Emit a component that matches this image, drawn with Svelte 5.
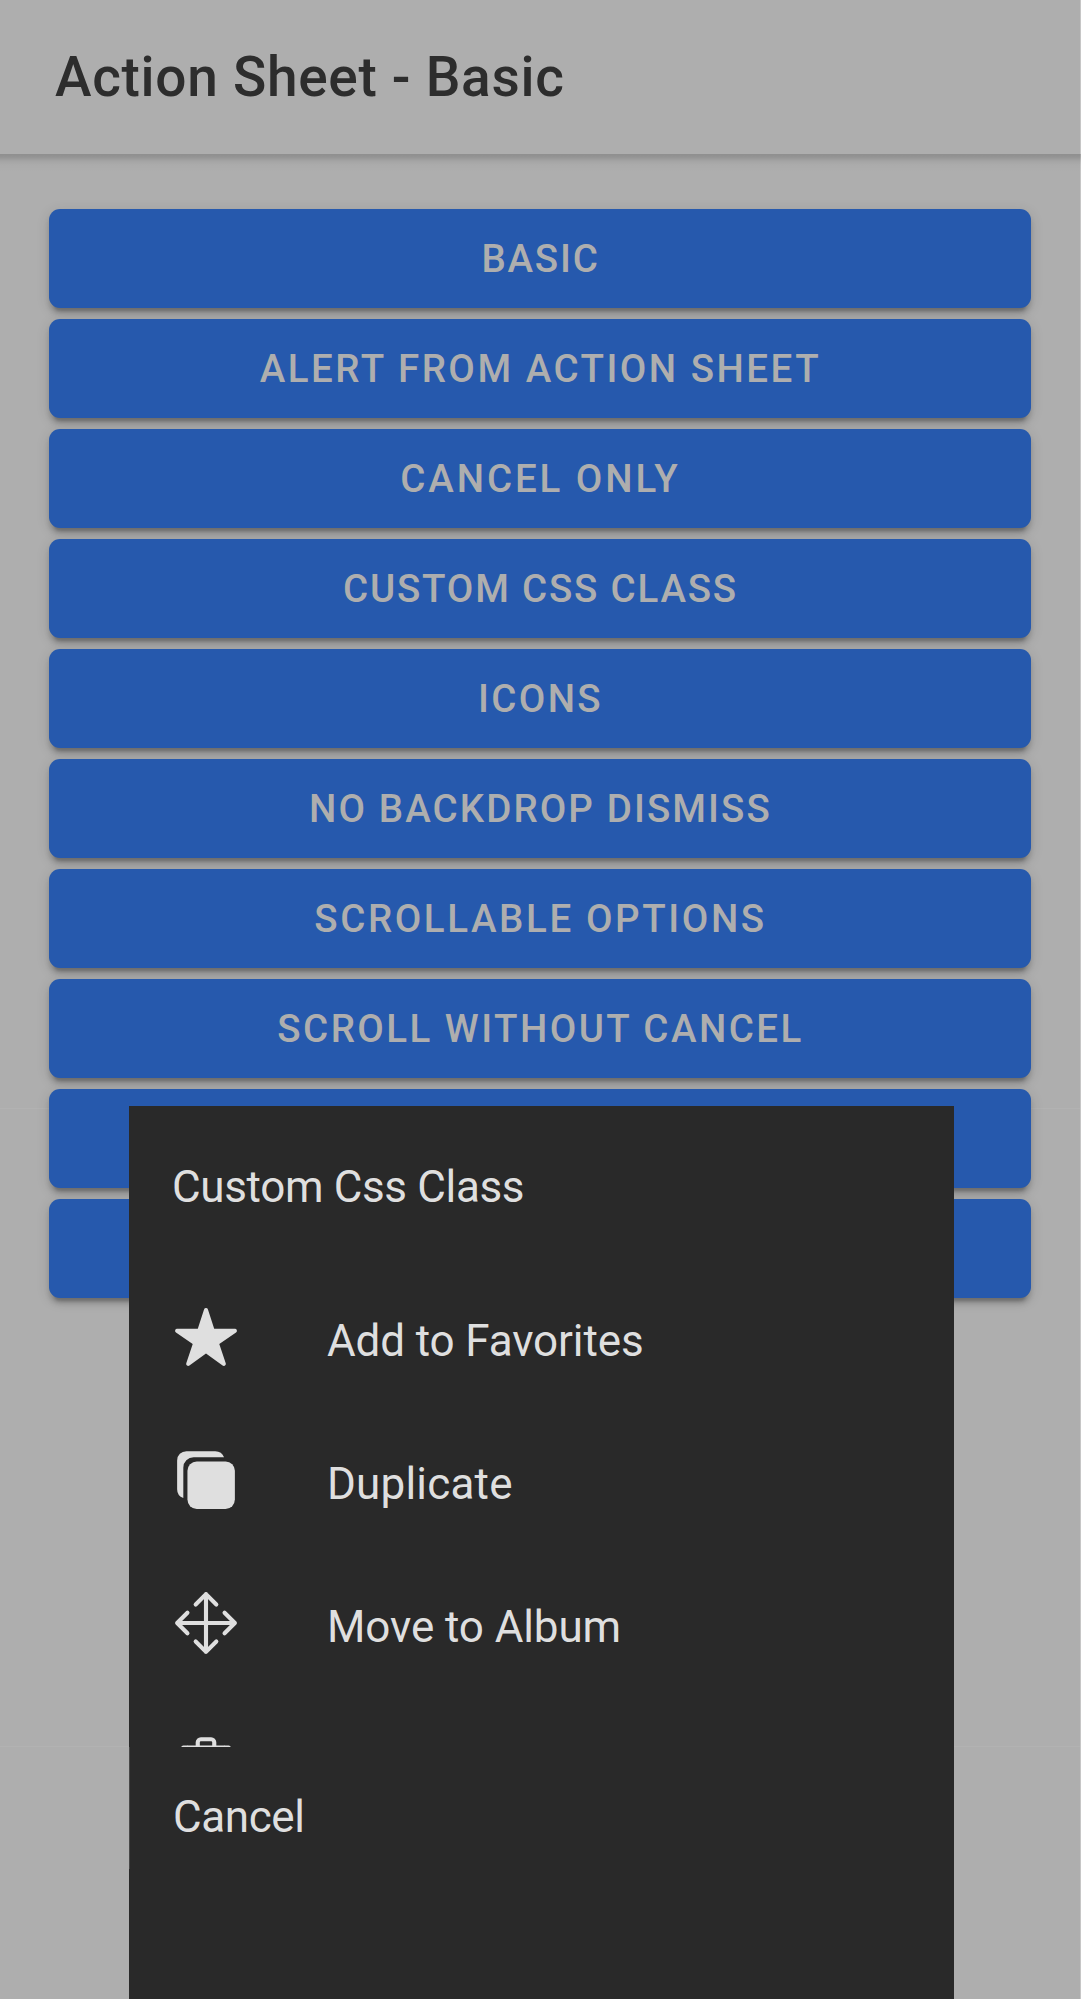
<script>
  // label and letter spacing in pixels
  const buttons = [
    ['Basic', 1.8],
    ['Alert from action sheet', 2.5],
    ['Cancel only', 2.9],
    ['Custom CSS class', 1.8],
    ['Icons', 2.4],
    ['No backdrop dismiss', 2.1],
    ['Scrollable options', 2.6],
    ['Scroll without cancel', 2.45],
    ['', 2.3],
    ['', 2.3]
  ];
</script>

<main>
  <header><h1>Action Sheet - Basic</h1></header>
  <div class="list">
    {#each buttons as [label, spacing]}
      <button style:letter-spacing="{spacing}px">{label}</button>
    {/each}
  </div>
  <section class="sheet">
    <div class="group">
      <h2>Custom Css Class</h2>
      <div class="row favorite">
        <svg viewBox="0 0 512 512"><path d="M394 480a16 16 0 01-9.39-3L256 383.76 127.39 477a16 16 0 01-24.55-18.08L153 310.35 23 221.2a16 16 0 019-29.2h160.38l48.4-148.95a16 16 0 0130.44 0l48.4 149H480a16 16 0 019.05 29.2L359 310.35l50.13 148.53A16 16 0 01394 480z" /></svg>
        <span>Add to Favorites</span>
      </div>
      <div class="row duplicate">
        <svg viewBox="0 0 512 512"><path d="M408 112H184a72 72 0 00-72 72v224a72 72 0 0072 72h224a72 72 0 0072-72V184a72 72 0 00-72-72z" /><path d="M395.88 80A72.12 72.12 0 00328 32H104a72 72 0 00-72 72v224a72.12 72.12 0 0048 67.88V160a80 80 0 0180-80z" /></svg>
        <span>Duplicate</span>
      </div>
      <div class="row album">
        <svg viewBox="0 0 512 512" class="line"><path d="M176 112l80-80 80 80M255.98 32l.02 448M176 400l80 80 80-80M400 176l80 80-80 80M112 176l-80 80 80 80M32 256h448" /></svg>
        <span>Move to Album</span>
      </div>
      <div class="row">
        <svg viewBox="0 0 512 512" class="line"><path d="M112 112l20 320c.95 18.49 14.4 32 32 32h184c18 0 31-13.500 32-32l20-320M80 112h352M192 112V72a24 24 0 0124-24h80a24 24 0 0124 24v40M256 176v224M184 176l8 224M328 176l-8 224" /></svg>
      </div>
    </div>
    <div class="cancel">Cancel</div>
  </section>
</main>

<style>
  :global(body) { margin: 0; }
  main {
    position: relative; width: 1081px; height: 1999px; overflow: hidden; font-family: Roboto, sans-serif;
    background:
      linear-gradient(#c6c6c6, #c6c6c6) 1080px 0 / 1px 100% no-repeat,
      linear-gradient(#b2b2b2, #b2b2b2) 0 1108px / 100% 1px no-repeat,
      linear-gradient(#b2b2b2, #b2b2b2) 0 1746px / 100% 1px no-repeat,
      #aeaeae;
  }
  header { box-sizing: border-box; height: 154px; padding: 0 55px; display: flex; align-items: center; }
  h1 { margin: 0; font-size: 55px; font-weight: 500; letter-spacing: .7px; color: #2d2d2d; }
  .list {
    padding: 55px 50px 55px 49px; display: flex; flex-direction: column; gap: 11px;
    background: linear-gradient(rgba(0, 0, 0, .18), rgba(0, 0, 0, .15) 3px, rgba(0, 0, 0, .06) 7px, rgba(0, 0, 0, .015) 11px, transparent 18px);
  }
  button { height: 99px; flex: none; padding: 0 6px 0 7px; border: 0; border-radius: 11px; background: #2659ad; color: #aeaeae; font: 500 38.5px Roboto, sans-serif; text-transform: uppercase; box-shadow: 0 8px 3px -5.5px rgba(0, 0, 0, .2), 0 5.5px 5.5px rgba(0, 0, 0, .14), 0 3px 14px rgba(0, 0, 0, .12); }
  .sheet { position: absolute; left: 129px; top: 1106px; width: 825px; height: 893px; background: #292929; color: #dfdfdf; font-size: 44px; }
  .group { height: 641px; overflow: hidden; }
  h2 { margin: 0; height: 163px; box-sizing: border-box; padding: 0 43px; line-height: 163px; font-size: 44px; font-weight: 400; letter-spacing: -.35px; }
  .row { height: 143px; display: flex; align-items: center; padding-left: 44px; gap: 88px; }
  .favorite { letter-spacing: -.13px; }
  .duplicate { letter-spacing: .2px; }
  .album { letter-spacing: -.1px; }
  svg { width: 66px; height: 66px; margin-bottom: 8px; fill: currentColor; }
  .line { fill: none; stroke: currentColor; stroke-width: 32; stroke-linecap: round; stroke-linejoin: round; }
  .cancel { box-sizing: border-box; height: 122px; padding-left: 43px; border-left: 1px solid #484848; line-height: 141px; letter-spacing: -.4px; }
</style>
